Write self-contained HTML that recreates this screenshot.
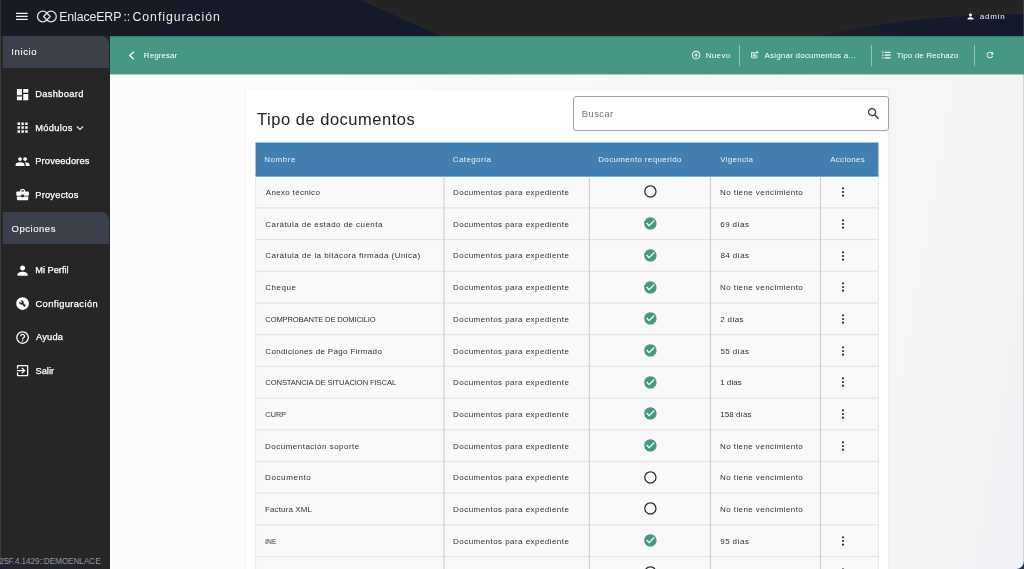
<!DOCTYPE html>
<html lang="es"><head><meta charset="utf-8"><title>EnlaceERP :: Configuración</title>
<style>
html,body{margin:0;padding:0}
body{width:1024px;height:569px;overflow:hidden;position:relative;font-family:"Liberation Sans",sans-serif;
 background:linear-gradient(100deg,#fdfdfd 0%,#fcfcfc 30%,#f8f8f8 62%,#f5f5f6 86%,#f2f2f6 100%)}
.t{position:absolute;white-space:pre;line-height:1;margin:0;will-change:transform}
.i{position:absolute;display:block}
.b{position:absolute}
</style></head><body>
<header>
<svg class="b" style="left:0;top:0" width="1024" height="36" viewBox="0 0 1024 36">
<defs><linearGradient id="hg" gradientUnits="userSpaceOnUse" x1="0" y1="0" x2="440" y2="0"><stop offset="0" stop-color="#171b26"/><stop offset="1" stop-color="#131b2c"/></linearGradient>
<linearGradient id="hr" gradientUnits="userSpaceOnUse" x1="820" y1="0" x2="1024" y2="0"><stop offset="0" stop-color="#1d2027"/><stop offset="0.45" stop-color="#141b2b"/><stop offset="1" stop-color="#111a2d"/></linearGradient></defs>
<rect width="1024" height="36" fill="#252525"/>
<path d="M0 0 L360.500 0 L440.600 36 L0 36 Z" fill="url(#hg)"/>
<path d="M820 36 Q 905 15 1024 14 L1024 36 Z" fill="url(#hr)"/>
</svg>
<svg class="b" style="left:15px;top:11px" width="14" height="11" viewBox="15 11 14 11"><path fill="#f2f2f2" d="M16 12.8h11.7v1.2H16zM16 15.8h11.7v1.2H16zM16 18.8h11.7v1.2H16z"/></svg>
<svg class="b" style="left:35px;top:8px" width="24" height="17" viewBox="35 8 24 17"><g fill="none" stroke="#e4e4e6" stroke-width="1.25" stroke-linejoin="round"><path d="M50.2 16.5 L46.6 12.8 A5.3 5.3 0 1 0 46.6 20.2 Z"/><path d="M43.6 16.5 L47.2 12.8 A5.3 5.3 0 1 1 47.2 20.2 Z"/></g></svg>
<div class="t" style="left:59px;top:11px;font-size:12.3px;color:#ececec;letter-spacing:-0.094px;transform:translateX(0.20px);">EnlaceERP</div>
<div class="t" style="left:123px;top:11px;font-size:12.3px;color:#ececec;letter-spacing:-0.050px;transform:translateX(0.50px);">::</div>
<div class="t" style="left:132px;top:11px;font-size:12.3px;color:#ececec;letter-spacing:0.950px;transform:translateX(0.50px);">Configuración</div>
<svg class="i" style="left:965.90px;top:11.90px" width="9.0" height="9.0" viewBox="0 0 24 24"><path fill="#ffffff" d="M12 12c2.21 0 4-1.79 4-4s-1.79-4-4-4-4 1.79-4 4 1.79 4 4 4zm0 2c-2.67 0-8 1.34-8 4v2h16v-2c0-2.66-5.33-4-8-4z"/></svg>
<div class="t" style="left:979px;top:13px;font-size:8px;color:#f4f4f4;letter-spacing:0.750px;transform:translateX(0.85px);">admin</div>
</header>
<nav>
<div class="b" style="left:0;top:36px;width:110px;height:533px;background:#262626"></div>
<div class="b" style="left:0;top:0;width:1px;height:569px;background:rgba(255,255,255,.1)"></div>
<div class="b" style="left:3px;top:36px;width:106px;height:32px;background:#3a414c;border-top-right-radius:8px"></div>
<div class="b" style="left:3px;top:212px;width:106px;height:32px;background:#3a414c;border-top-right-radius:8px"></div>
<div class="t" style="left:11px;top:47px;font-size:9.5px;color:#f4f4f4;letter-spacing:0.640px;transform:translateX(0.25px);-webkit-text-stroke:0.15px #f4f4f4;">Inicio</div>
<div class="t" style="left:11px;top:224px;font-size:9.5px;color:#f4f4f4;letter-spacing:0.536px;transform:translateX(0.50px);-webkit-text-stroke:0.15px #f4f4f4;">Opciones</div>
<svg class="i" style="left:14.90px;top:86.85px" width="15.2" height="15.2" viewBox="0 0 24 24"><path fill="#ffffff" d="M3 13h8V3H3v10zm0 8h8v-6H3v6zm10 0h8V11h-8v10zm0-18v6h8V3h-8z"/></svg>
<div class="t" style="left:35px;top:90px;font-size:9.3px;color:#ffffff;letter-spacing:0.344px;transform:translateX(0.25px);-webkit-text-stroke:0.25px #fff;">Dashboard</div>
<svg class="i" style="left:14.90px;top:120.30px" width="15.2" height="15.2" viewBox="0 0 24 24"><path fill="#ffffff" d="M4 8h4V4H4v4zm6 12h4v-4h-4v4zm-6 0h4v-4H4v4zm0-6h4v-4H4v4zm6 0h4v-4h-4v4zm6-10v4h4V4h-4zm-6 4h4V4h-4v4zm6 6h4v-4h-4v4zm0 6h4v-4h-4v4z"/></svg>
<div class="t" style="left:35px;top:124px;font-size:9.3px;color:#ffffff;letter-spacing:0.333px;transform:translateX(0.25px);-webkit-text-stroke:0.25px #fff;">Módulos</div>
<svg class="i" style="left:14.90px;top:153.75px" width="15.2" height="15.2" viewBox="0 0 24 24"><path fill="#ffffff" d="M16 11c1.66 0 2.99-1.34 2.99-3S17.66 5 16 5c-1.66 0-3 1.34-3 3s1.34 3 3 3zm-8 0c1.66 0 2.99-1.34 2.99-3S9.66 5 8 5C6.34 5 5 6.34 5 8s1.34 3 3 3zm0 2c-2.33 0-7 1.17-7 3.5V19h14v-2.5c0-2.33-4.67-3.5-7-3.5zm8 0c-.29 0-.62.02-.97.05 1.16.84 1.97 1.97 1.97 3.45V19h6v-2.5c0-2.33-4.67-3.5-7-3.5z"/></svg>
<div class="t" style="left:35px;top:157px;font-size:9.3px;color:#ffffff;letter-spacing:0.150px;transform:translateX(0.25px);-webkit-text-stroke:0.25px #fff;">Proveedores</div>
<svg class="i" style="left:14.90px;top:187.20px" width="15.2" height="15.2" viewBox="0 0 24 24"><path fill="#ffffff" d="M10 16v-1H3.01L3 19c0 1.11.89 2 2 2h14c1.11 0 2-.89 2-2v-4h-7v1h-4zm10-9h-4.01V5l-2-2h-4l-2 2v2H4c-1.1 0-2 .9-2 2v3c0 1.11.89 2 2 2h6v-2h4v2h6c1.1 0 2-.9 2-2V9c0-1.1-.9-2-2-2zm-6 0h-4V5h4v2z"/></svg>
<div class="t" style="left:35px;top:191px;font-size:9.3px;color:#ffffff;letter-spacing:0.219px;transform:translateX(0.25px);-webkit-text-stroke:0.25px #fff;">Proyectos</div>
<svg class="i" style="left:14.90px;top:263.00px" width="15.2" height="15.2" viewBox="0 0 24 24"><path fill="#ffffff" d="M12 12c2.21 0 4-1.79 4-4s-1.79-4-4-4-4 1.79-4 4 1.79 4 4 4zm0 2c-2.67 0-8 1.34-8 4v2h16v-2c0-2.66-5.33-4-8-4z"/></svg>
<div class="t" style="left:35px;top:266px;font-size:9.3px;color:#ffffff;letter-spacing:-0.031px;transform:translateX(0.25px);-webkit-text-stroke:0.25px #fff;">Mi Perfil</div>
<svg class="i" style="left:14.90px;top:296.45px" width="15.2" height="15.2" viewBox="0 0 24 24"><path fill="#ffffff" d="M12 2C6.48 2 2 6.48 2 12s4.48 10 10 10 10-4.48 10-10S17.52 2 12 2zm4.9 13.49-1.4 1.4c-.2.2-.51.2-.71 0l-3.41-3.41c-1.22.43-2.64.17-3.62-.81-1.11-1.11-1.3-2.79-.59-4.1l2.35 2.35 1.41-1.41-2.35-2.34c1.32-.71 2.99-.52 4.1.59.98.98 1.24 2.4.81 3.62l3.41 3.41c.19.19.19.51 0 .7z"/></svg>
<div class="t" style="left:35px;top:300px;font-size:9.3px;color:#ffffff;letter-spacing:0.396px;transform:translateX(0.50px);-webkit-text-stroke:0.25px #fff;">Configuración</div>
<svg class="i" style="left:14.90px;top:329.90px" width="15.2" height="15.2" viewBox="0 0 24 24"><path fill="#ffffff" d="M11 18h2v-2h-2v2zm1-16C6.48 2 2 6.48 2 12s4.48 10 10 10 10-4.48 10-10S17.52 2 12 2zm0 18c-4.41 0-8-3.59-8-8s3.59-8 8-8 8 3.59 8 8-3.59 8-8 8zm0-14c-2.21 0-4 1.79-4 4h2c0-1.1.9-2 2-2s2 .9 2 2c0 2-3 1.75-3 5h2c0-2.25 3-2.5 3-5 0-2.21-1.79-4-4-4z"/></svg>
<div class="t" style="left:36px;top:333px;font-size:9.3px;color:#ffffff;letter-spacing:0.188px;transform:translateX(0.00px);-webkit-text-stroke:0.25px #fff;">Ayuda</div>
<svg class="i" style="left:14.90px;top:363.35px" width="15.2" height="15.2" viewBox="0 0 24 24"><path fill="#ffffff" d="M10.09 15.59L11.5 17l5-5-5-5-1.41 1.41L12.67 11H3v2h9.67l-2.58 2.59zM19 3H5c-1.11 0-2 .9-2 2v4h2V5h14v14H5v-4H3v4c0 1.1.89 2 2 2h14c1.1 0 2-.9 2-2V5c0-1.1-.9-2-2-2z"/></svg>
<div class="t" style="left:35px;top:367px;font-size:9.3px;color:#ffffff;transform:translateX(0.50px);-webkit-text-stroke:0.25px #fff;">Salir</div>
<svg class="i" style="left:72.50px;top:120.60px" width="14" height="14" viewBox="0 0 24 24"><path fill="#ffffff" d="M16.59 8.59L12 13.17 7.41 8.59 6 10l6 6 6-6z"/></svg>
<div class="t" style="left:-1px;top:557px;font-size:8.8px;color:#8ba0b6;transform:translateX(0.54px) scaleX(0.9174);transform-origin:0 50%;">25F.4.1429::DEMOENLACE</div>
</nav>
<div role="toolbar">
<div class="b" style="left:110px;top:36px;width:914px;height:38px;background:linear-gradient(rgba(0,0,0,.22),rgba(0,0,0,0) 2px),#459884"></div><div class="b" style="left:110px;top:74px;width:914px;height:1px;background:rgba(69,152,132,.45)"></div>
<svg class="b" style="left:127px;top:50px" width="9" height="11" viewBox="127 50 9 11"><path d="M133.8 51.8 L129.7 55.5 L133.8 59.2" fill="none" stroke="#fff" stroke-width="1.15"/></svg>
<div class="t" style="left:143px;top:52px;font-size:8px;color:#ffffff;letter-spacing:0.071px;transform:translateX(0.85px);">Regresar</div>
<svg class="i" style="left:691.10px;top:50.30px" width="10.2" height="10.2" viewBox="0 0 24 24"><path fill="#ffffff" d="M13 7h-2v4H7v2h4v4h2v-4h4v-2h-4V7zm-1-5C6.48 2 2 6.48 2 12s4.48 10 10 10 10-4.48 10-10S17.52 2 12 2zm0 18c-4.41 0-8-3.59-8-8s3.59-8 8-8 8 3.59 8 8-3.59 8-8 8z"/></svg>
<div class="t" style="left:705px;top:52px;font-size:8px;color:#ffffff;letter-spacing:0.350px;transform:translateX(0.65px);">Nuevo</div>
<div class="b" style="left:739px;top:45px;width:1px;height:21px;background:#8fc3b5"></div>
<div class="b" style="left:871px;top:45px;width:1px;height:21px;background:#8fc3b5"></div>
<div class="b" style="left:974px;top:45px;width:1px;height:21px;background:#8fc3b5"></div>
<svg class="i" style="left:749.65px;top:50.45px" width="9.3" height="9.3" viewBox="0 0 24 24"><path fill="#ffffff" d="M17 19.22H5V7h7V5H5c-1.1 0-2 .9-2 2v12c0 1.1.9 2 2 2h12c1.1 0 2-.9 2-2v-7h-2v7.22z M19 2h-2v3h-3c.01.01 0 2 0 2h3v2.99c.01.01 2 0 2 0V7h3V5h-3V2zM7 9h8v2H7zm0 3v2h8v-2h-3zm0 3h8v2H7z"/></svg>
<div class="t" style="left:764px;top:52px;font-size:8px;color:#ffffff;letter-spacing:0.223px;transform:translateX(0.40px);">Asignar documentos a...</div>
<svg class="b" style="left:881px;top:50px" width="11" height="10" viewBox="881 50 11 10"><path fill="#fff" d="M882.3 51.8h1.2v1.1h-1.2zM884.7 51.8h5.8v1.1h-5.8zM882.3 54.55h1.2v1.1h-1.2zM884.7 54.55h5.8v1.1h-5.8zM882.3 57.3h1.2v1.1h-1.2zM884.7 57.3h5.8v1.1h-5.8z"/></svg>
<div class="t" style="left:896px;top:52px;font-size:8px;color:#ffffff;letter-spacing:0.121px;transform:translateX(0.55px);">Tipo de Rechazo</div>
<svg class="i" style="left:984.90px;top:50.40px" width="9.8" height="9.8" viewBox="0 0 24 24"><path fill="#ffffff" d="M17.65 6.35C16.2 4.9 14.21 4 12 4c-4.42 0-7.99 3.58-7.99 8s3.57 8 7.99 8c3.73 0 6.84-2.55 7.73-6h-2.08c-.82 2.33-3.04 4-5.65 4-3.31 0-6-2.69-6-6s2.69-6 6-6c1.66 0 3.14.69 4.22 1.78L13 11h7V4l-2.35 2.35z"/></svg>
</div>
<main>
<div class="b" style="left:246px;top:90px;width:642px;height:479px;background:#ffffff;box-shadow:0 1px 4px rgba(0,0,0,.05),0 0 1px rgba(0,0,0,.05)"></div>
<div class="t" style="left:257px;top:111px;font-size:16.5px;color:#222222;letter-spacing:0.518px;transform:translateX(0.05px);">Tipo de documentos</div>
<div class="b" style="left:573px;top:96px;width:314px;height:33px;border:1px solid #9fa1ac;border-radius:3px;background:#fff;box-sizing:content-box"></div>
<div class="t" style="left:581px;top:110px;font-size:9.3px;color:#6e707a;letter-spacing:0.480px;transform:translateX(0.85px);">Buscar</div>
<svg class="i" style="left:865.70px;top:105.60px" width="15.4" height="15.4" viewBox="0 0 24 24"><path fill="#333333" d="M15.5 14h-.79l-.28-.27C15.41 12.59 16 11.11 16 9.5 16 5.91 13.09 3 9.5 3S3 5.91 3 9.5 5.91 16 9.5 16c1.61 0 3.09-.59 4.23-1.57l.27.28v.79l5 4.99L20.49 19l-4.99-5zm-6 0C7.01 14 5 11.99 5 9.5S7.01 5 9.5 5 14 7.01 14 9.5 11.99 14 9.5 14z"/></svg>
<svg class="b" style="left:0;top:0" width="1024" height="569" viewBox="0 0 1024 569"><rect x="255.54" y="177.60" width="622.91" height="392.6" fill="#f9f9f9"/><rect x="255.54" y="142.5" width="622.91" height="33.90" fill="#4280b4"/><rect x="255.54" y="175.10" width="622.91" height="1.3" fill="#3d7ab0"/><rect x="255.54" y="207.25" width="622.91" height="1.2" fill="#e4e4e4"/><rect x="255.54" y="238.95" width="622.91" height="1.2" fill="#e4e4e4"/><rect x="255.54" y="270.65" width="622.91" height="1.2" fill="#e4e4e4"/><rect x="255.54" y="302.35" width="622.91" height="1.2" fill="#e4e4e4"/><rect x="255.54" y="334.05" width="622.91" height="1.2" fill="#e4e4e4"/><rect x="255.54" y="365.75" width="622.91" height="1.2" fill="#e4e4e4"/><rect x="255.54" y="397.45" width="622.91" height="1.2" fill="#e4e4e4"/><rect x="255.54" y="429.15" width="622.91" height="1.2" fill="#e4e4e4"/><rect x="255.54" y="460.85" width="622.91" height="1.2" fill="#e4e4e4"/><rect x="255.54" y="492.55" width="622.91" height="1.2" fill="#e4e4e4"/><rect x="255.54" y="524.25" width="622.91" height="1.2" fill="#e4e4e4"/><rect x="255.54" y="555.95" width="622.91" height="1.2" fill="#e4e4e4"/><rect x="255.54" y="587.65" width="622.91" height="1.2" fill="#e4e4e4"/><rect x="255.04" y="177.20" width="1.0" height="391.80" fill="#e6e6e6"/><rect x="443.27" y="176.70" width="1.25" height="392.30" fill="#d2d2d2"/><rect x="588.80" y="176.70" width="1.25" height="392.30" fill="#d2d2d2"/><rect x="709.83" y="176.70" width="1.25" height="392.30" fill="#d2d2d2"/><rect x="819.83" y="176.70" width="1.25" height="392.30" fill="#d2d2d2"/><rect x="877.95" y="177.20" width="1.0" height="391.80" fill="#e6e6e6"/></svg>
<div class="t" style="left:264px;top:156px;font-size:8px;color:#eaf0f6;letter-spacing:0.570px;transform:translateX(0.15px);">Nombre</div>
<div class="t" style="left:452px;top:156px;font-size:8px;color:#eaf0f6;letter-spacing:0.381px;transform:translateX(0.80px);">Categoría</div>
<div class="t" style="left:598px;top:156px;font-size:8px;color:#eaf0f6;letter-spacing:0.347px;transform:translateX(0.25px);">Documento requerido</div>
<div class="t" style="left:720px;top:156px;font-size:8px;color:#eaf0f6;letter-spacing:0.286px;transform:translateX(0.30px);">Vigencia</div>
<div class="t" style="left:830px;top:156px;font-size:8px;color:#eaf0f6;letter-spacing:0.293px;transform:translateX(0.20px);">Acciones</div>
<div class="t" style="left:265px;top:189px;font-size:8px;color:#303030;letter-spacing:0.317px;transform:translateX(0.80px);">Anexo técnico</div>
<div class="t" style="left:453px;top:189px;font-size:8px;color:#303030;letter-spacing:0.452px;transform:translateX(0.05px);">Documentos para expediente</div>
<svg class="i" style="left:642.60px;top:184.45px" width="14.8" height="14.8" viewBox="0 0 24 24"><path fill="#262626" d="M12 2C6.48 2 2 6.48 2 12s4.48 10 10 10 10-4.48 10-10S17.52 2 12 2zm0 18c-4.42 0-8-3.58-8-8s3.58-8 8-8 8 3.58 8 8-3.58 8-8 8z"/></svg>
<div class="t" style="left:720px;top:189px;font-size:8px;color:#303030;letter-spacing:0.421px;transform:translateX(0.05px);">No tiene vencimiento</div>
<svg class="b" style="left:840.00px;top:186.15px" width="6" height="12" viewBox="-3 -6 6 12"><g fill="#303030"><circle cx="0" cy="-3.7" r="1.12"/><circle cx="0" cy="0" r="1.12"/><circle cx="0" cy="3.7" r="1.12"/></g></svg>
<div class="t" style="left:265px;top:221px;font-size:8px;color:#303030;letter-spacing:0.448px;transform:translateX(0.30px);">Carátula de estado de cuenta</div>
<div class="t" style="left:453px;top:221px;font-size:8px;color:#303030;letter-spacing:0.452px;transform:translateX(0.05px);">Documentos para expediente</div>
<svg class="i" style="left:642.60px;top:216.15px" width="14.8" height="14.8" viewBox="0 0 24 24"><path fill="#459884" d="M12 2C6.48 2 2 6.48 2 12s4.48 10 10 10 10-4.48 10-10S17.52 2 12 2zm-2 15l-5-5 1.41-1.41L10 14.17l7.59-7.59L19 8l-9 9z"/></svg>
<div class="t" style="left:720px;top:221px;font-size:8px;color:#303030;letter-spacing:0.400px;transform:translateX(0.30px);">69 días</div>
<svg class="b" style="left:840.00px;top:217.85px" width="6" height="12" viewBox="-3 -6 6 12"><g fill="#303030"><circle cx="0" cy="-3.7" r="1.12"/><circle cx="0" cy="0" r="1.12"/><circle cx="0" cy="3.7" r="1.12"/></g></svg>
<div class="t" style="left:265px;top:252px;font-size:8px;color:#303030;letter-spacing:0.458px;transform:translateX(0.30px);">Carátula de la bitácora firmada (Unica)</div>
<div class="t" style="left:453px;top:252px;font-size:8px;color:#303030;letter-spacing:0.452px;transform:translateX(0.05px);">Documentos para expediente</div>
<svg class="i" style="left:642.60px;top:247.85px" width="14.8" height="14.8" viewBox="0 0 24 24"><path fill="#459884" d="M12 2C6.48 2 2 6.48 2 12s4.48 10 10 10 10-4.48 10-10S17.52 2 12 2zm-2 15l-5-5 1.41-1.41L10 14.17l7.59-7.59L19 8l-9 9z"/></svg>
<div class="t" style="left:720px;top:252px;font-size:8px;color:#303030;letter-spacing:0.358px;transform:translateX(0.55px);">84 días</div>
<svg class="b" style="left:840.00px;top:249.55px" width="6" height="12" viewBox="-3 -6 6 12"><g fill="#303030"><circle cx="0" cy="-3.7" r="1.12"/><circle cx="0" cy="0" r="1.12"/><circle cx="0" cy="3.7" r="1.12"/></g></svg>
<div class="t" style="left:265px;top:284px;font-size:8px;color:#303030;letter-spacing:0.530px;transform:translateX(0.30px);">Cheque</div>
<div class="t" style="left:453px;top:284px;font-size:8px;color:#303030;letter-spacing:0.452px;transform:translateX(0.05px);">Documentos para expediente</div>
<svg class="i" style="left:642.60px;top:279.55px" width="14.8" height="14.8" viewBox="0 0 24 24"><path fill="#459884" d="M12 2C6.48 2 2 6.48 2 12s4.48 10 10 10 10-4.48 10-10S17.52 2 12 2zm-2 15l-5-5 1.41-1.41L10 14.17l7.59-7.59L19 8l-9 9z"/></svg>
<div class="t" style="left:720px;top:284px;font-size:8px;color:#303030;letter-spacing:0.421px;transform:translateX(0.05px);">No tiene vencimiento</div>
<svg class="b" style="left:840.00px;top:281.25px" width="6" height="12" viewBox="-3 -6 6 12"><g fill="#303030"><circle cx="0" cy="-3.7" r="1.12"/><circle cx="0" cy="0" r="1.12"/><circle cx="0" cy="3.7" r="1.12"/></g></svg>
<div class="t" style="left:265px;top:316px;font-size:7.6px;color:#303030;letter-spacing:-0.152px;transform:translateX(0.30px);">COMPROBANTE DE DOMICILIO</div>
<div class="t" style="left:453px;top:316px;font-size:8px;color:#303030;letter-spacing:0.452px;transform:translateX(0.05px);">Documentos para expediente</div>
<svg class="i" style="left:642.60px;top:311.25px" width="14.8" height="14.8" viewBox="0 0 24 24"><path fill="#459884" d="M12 2C6.48 2 2 6.48 2 12s4.48 10 10 10 10-4.48 10-10S17.52 2 12 2zm-2 15l-5-5 1.41-1.41L10 14.17l7.59-7.59L19 8l-9 9z"/></svg>
<div class="t" style="left:720px;top:316px;font-size:8px;color:#303030;letter-spacing:0.300px;transform:translateX(0.30px);">2 días</div>
<svg class="b" style="left:840.00px;top:312.95px" width="6" height="12" viewBox="-3 -6 6 12"><g fill="#303030"><circle cx="0" cy="-3.7" r="1.12"/><circle cx="0" cy="0" r="1.12"/><circle cx="0" cy="3.7" r="1.12"/></g></svg>
<div class="t" style="left:265px;top:348px;font-size:8px;color:#303030;letter-spacing:0.344px;transform:translateX(0.30px);">Condiciones de Pago Firmado</div>
<div class="t" style="left:453px;top:348px;font-size:8px;color:#303030;letter-spacing:0.452px;transform:translateX(0.05px);">Documentos para expediente</div>
<svg class="i" style="left:642.60px;top:342.95px" width="14.8" height="14.8" viewBox="0 0 24 24"><path fill="#459884" d="M12 2C6.48 2 2 6.48 2 12s4.48 10 10 10 10-4.48 10-10S17.52 2 12 2zm-2 15l-5-5 1.41-1.41L10 14.17l7.59-7.59L19 8l-9 9z"/></svg>
<div class="t" style="left:720px;top:348px;font-size:8px;color:#303030;letter-spacing:0.358px;transform:translateX(0.55px);">55 días</div>
<svg class="b" style="left:840.00px;top:344.65px" width="6" height="12" viewBox="-3 -6 6 12"><g fill="#303030"><circle cx="0" cy="-3.7" r="1.12"/><circle cx="0" cy="0" r="1.12"/><circle cx="0" cy="3.7" r="1.12"/></g></svg>
<div class="t" style="left:265px;top:379px;font-size:7.6px;color:#303030;letter-spacing:-0.095px;transform:translateX(0.30px);">CONSTANCIA DE SITUACION FISCAL</div>
<div class="t" style="left:453px;top:379px;font-size:8px;color:#303030;letter-spacing:0.452px;transform:translateX(0.05px);">Documentos para expediente</div>
<svg class="i" style="left:642.60px;top:374.65px" width="14.8" height="14.8" viewBox="0 0 24 24"><path fill="#459884" d="M12 2C6.48 2 2 6.48 2 12s4.48 10 10 10 10-4.48 10-10S17.52 2 12 2zm-2 15l-5-5 1.41-1.41L10 14.17l7.59-7.59L19 8l-9 9z"/></svg>
<div class="t" style="left:720px;top:379px;font-size:8px;color:#303030;letter-spacing:-0.080px;transform:translateX(0.30px);">1 días</div>
<svg class="b" style="left:840.00px;top:376.35px" width="6" height="12" viewBox="-3 -6 6 12"><g fill="#303030"><circle cx="0" cy="-3.7" r="1.12"/><circle cx="0" cy="0" r="1.12"/><circle cx="0" cy="3.7" r="1.12"/></g></svg>
<div class="t" style="left:265px;top:411px;font-size:7.6px;color:#303030;transform:translateX(0.32px) scaleX(0.9610);transform-origin:0 50%;">CURP</div>
<div class="t" style="left:453px;top:411px;font-size:8px;color:#303030;letter-spacing:0.452px;transform:translateX(0.05px);">Documentos para expediente</div>
<svg class="i" style="left:642.60px;top:406.35px" width="14.8" height="14.8" viewBox="0 0 24 24"><path fill="#459884" d="M12 2C6.48 2 2 6.48 2 12s4.48 10 10 10 10-4.48 10-10S17.52 2 12 2zm-2 15l-5-5 1.41-1.41L10 14.17l7.59-7.59L19 8l-9 9z"/></svg>
<div class="t" style="left:720px;top:411px;font-size:8px;color:#303030;letter-spacing:0.057px;transform:translateX(0.30px);">158 días</div>
<svg class="b" style="left:840.00px;top:408.05px" width="6" height="12" viewBox="-3 -6 6 12"><g fill="#303030"><circle cx="0" cy="-3.7" r="1.12"/><circle cx="0" cy="0" r="1.12"/><circle cx="0" cy="3.7" r="1.12"/></g></svg>
<div class="t" style="left:265px;top:443px;font-size:8px;color:#303030;letter-spacing:0.485px;transform:translateX(0.05px);">Documentación soporte</div>
<div class="t" style="left:453px;top:443px;font-size:8px;color:#303030;letter-spacing:0.452px;transform:translateX(0.05px);">Documentos para expediente</div>
<svg class="i" style="left:642.60px;top:438.05px" width="14.8" height="14.8" viewBox="0 0 24 24"><path fill="#459884" d="M12 2C6.48 2 2 6.48 2 12s4.48 10 10 10 10-4.48 10-10S17.52 2 12 2zm-2 15l-5-5 1.41-1.41L10 14.17l7.59-7.59L19 8l-9 9z"/></svg>
<div class="t" style="left:720px;top:443px;font-size:8px;color:#303030;letter-spacing:0.421px;transform:translateX(0.05px);">No tiene vencimiento</div>
<svg class="b" style="left:840.00px;top:439.75px" width="6" height="12" viewBox="-3 -6 6 12"><g fill="#303030"><circle cx="0" cy="-3.7" r="1.12"/><circle cx="0" cy="0" r="1.12"/><circle cx="0" cy="3.7" r="1.12"/></g></svg>
<div class="t" style="left:265px;top:474px;font-size:8px;color:#303030;letter-spacing:0.606px;transform:translateX(0.05px);">Documento</div>
<div class="t" style="left:453px;top:474px;font-size:8px;color:#303030;letter-spacing:0.452px;transform:translateX(0.05px);">Documentos para expediente</div>
<svg class="i" style="left:642.60px;top:469.75px" width="14.8" height="14.8" viewBox="0 0 24 24"><path fill="#262626" d="M12 2C6.48 2 2 6.48 2 12s4.48 10 10 10 10-4.48 10-10S17.52 2 12 2zm0 18c-4.42 0-8-3.58-8-8s3.58-8 8-8 8 3.58 8 8-3.58 8-8 8z"/></svg>
<div class="t" style="left:720px;top:474px;font-size:8px;color:#303030;letter-spacing:0.421px;transform:translateX(0.05px);">No tiene vencimiento</div>
<div class="t" style="left:265px;top:506px;font-size:8px;color:#303030;letter-spacing:0.115px;transform:translateX(0.05px);">Factura XML</div>
<div class="t" style="left:453px;top:506px;font-size:8px;color:#303030;letter-spacing:0.452px;transform:translateX(0.05px);">Documentos para expediente</div>
<svg class="i" style="left:642.60px;top:501.45px" width="14.8" height="14.8" viewBox="0 0 24 24"><path fill="#262626" d="M12 2C6.48 2 2 6.48 2 12s4.48 10 10 10 10-4.48 10-10S17.52 2 12 2zm0 18c-4.42 0-8-3.58-8-8s3.58-8 8-8 8 3.58 8 8-3.58 8-8 8z"/></svg>
<div class="t" style="left:720px;top:506px;font-size:8px;color:#303030;letter-spacing:0.421px;transform:translateX(0.05px);">No tiene vencimiento</div>
<div class="t" style="left:265px;top:538px;font-size:7.6px;color:#303030;transform:translateX(0.12px) scaleX(0.9106);transform-origin:0 50%;">INE</div>
<div class="t" style="left:453px;top:538px;font-size:8px;color:#303030;letter-spacing:0.452px;transform:translateX(0.05px);">Documentos para expediente</div>
<svg class="i" style="left:642.60px;top:533.15px" width="14.8" height="14.8" viewBox="0 0 24 24"><path fill="#459884" d="M12 2C6.48 2 2 6.48 2 12s4.48 10 10 10 10-4.48 10-10S17.52 2 12 2zm-2 15l-5-5 1.41-1.41L10 14.17l7.59-7.59L19 8l-9 9z"/></svg>
<div class="t" style="left:720px;top:538px;font-size:8px;color:#303030;letter-spacing:0.400px;transform:translateX(0.30px);">95 días</div>
<svg class="b" style="left:840.00px;top:534.85px" width="6" height="12" viewBox="-3 -6 6 12"><g fill="#303030"><circle cx="0" cy="-3.7" r="1.12"/><circle cx="0" cy="0" r="1.12"/><circle cx="0" cy="3.7" r="1.12"/></g></svg>
<svg class="i" style="left:642.60px;top:564.85px" width="14.8" height="14.8" viewBox="0 0 24 24"><path fill="#262626" d="M12 2C6.48 2 2 6.48 2 12s4.48 10 10 10 10-4.48 10-10S17.52 2 12 2zm0 18c-4.42 0-8-3.58-8-8s3.58-8 8-8 8 3.58 8 8-3.58 8-8 8z"/></svg>
<svg class="b" style="left:840.00px;top:566.55px" width="6" height="12" viewBox="-3 -6 6 12"><g fill="#303030"><circle cx="0" cy="-3.7" r="1.12"/><circle cx="0" cy="0" r="1.12"/><circle cx="0" cy="3.7" r="1.12"/></g></svg>
<div class="b" style="left:1023px;top:0;width:1px;height:569px;background:rgba(128,128,128,.28)"></div>
</main>
<svg class="b" style="left:1016px;top:561px" width="8" height="8" viewBox="0 0 8 8"><path d="M8 0 A8 8 0 0 1 0 8 L8 8 Z" fill="#2a2a6e"/></svg>
<svg class="b" style="left:0;top:564px" width="5" height="5" viewBox="0 0 5 5"><path d="M0 0 A5 5 0 0 0 5 5 L0 5 Z" fill="#2b1145"/></svg>
</body></html>
